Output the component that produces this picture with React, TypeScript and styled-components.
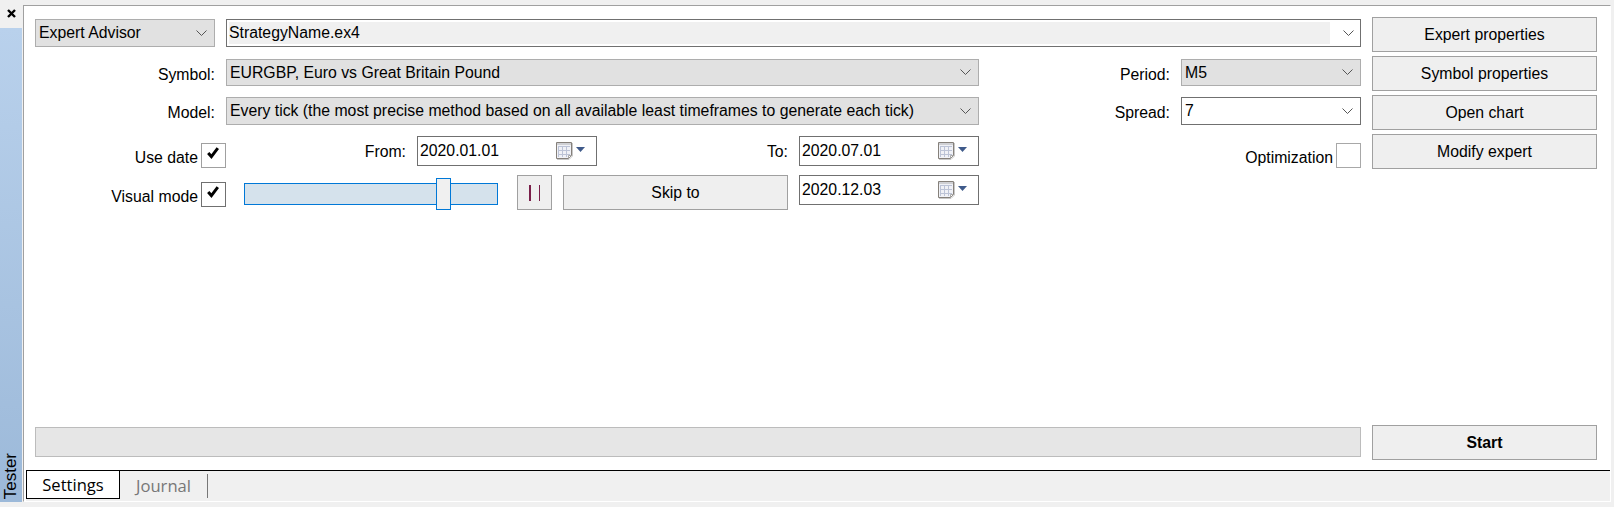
import React from "react";
import styled, { createGlobalStyle } from "styled-components";

const GlobalStyle = createGlobalStyle`
  html, body {
    margin: 0;
    padding: 0;
    background: #f0f0f0;
  }
  * {
    box-sizing: border-box;
  }
`;

const Chevron = () => (
  <svg width="11" height="7" viewBox="0 0 11 7">
    <path d="M0.5 0.5 L5.5 5.5 L10.5 0.5" fill="none" stroke="#555" strokeWidth="1" />
  </svg>
);

const CalendarIcon = () => (
  <svg width="29" height="18" viewBox="0 0 29 18">
    <path d="M1 17.5 H13 L16.5 14 V1" fill="none" stroke="#c8c8c8" />
    <path d="M0.5 0.5 H15.5 V13.5 L12.5 16.5 H0.5 Z" fill="#f0f1f6" stroke="#85807a" />
    <path d="M1 1.5 H15 M1 2.5 H15" stroke="#cfd0d4" />
    <path d="M2 4.5 H14 M2 8.5 H14 M2 12.5 H14 M2.5 4 V15 M6.5 4 V15 M10.5 4 V15" stroke="#bcc3d6" />
    <path d="M12.5 16 V13.5 H15" fill="#fff" stroke="#a8a8a8" />
    <path d="M20 5 H29 L24.5 10 Z" fill="#3f5a8a" />
  </svg>
);

const CheckMark = () => (
  <svg width="12" height="12" viewBox="0 0 12 12">
    <path d="M1.2 6 L4.4 9.6 L10.8 1.2" fill="none" stroke="#000" strokeWidth="3" />
  </svg>
);

const CloseIcon = () => (
  <svg width="9" height="9" viewBox="0 0 9 9">
    <path d="M1 1 L8 8 M8 1 L1 8" stroke="#000" strokeWidth="2.4" />
  </svg>
);

const App = () => {
  return (
    <>
      <GlobalStyle />
      <Window>
        <Sidebar>
          <CloseBar>
            <CloseIcon />
          </CloseBar>
          <DockTab>
            <DockLabel>Tester</DockLabel>
          </DockTab>
        </Sidebar>
        <Main>
          <Panel>
            <TopArea>
              <Form>
                <Row $height={28}>
                  <Select $width={180}>
                    <span>Expert Advisor</span>
                    <Chevron />
                  </Select>
                  <Combo>
                    <ComboFill>StrategyName.ex4</ComboFill>
                    <ComboArrow>
                      <Chevron />
                    </ComboArrow>
                  </Combo>
                </Row>
                <Row $height={27} $top={12}>
                  <Label $width={180}>Symbol:</Label>
                  <Select $width={753}>
                    <span>EURGBP, Euro vs Great Britain Pound</span>
                    <Chevron />
                  </Select>
                  <Spacer />
                  <Label>Period:</Label>
                  <Select $width={180}>
                    <span>M5</span>
                    <Chevron />
                  </Select>
                </Row>
                <Row $height={28} $top={11}>
                  <Label $width={180}>Model:</Label>
                  <Select $width={753}>
                    <span>Every tick (the most precise method based on all available least timeframes to generate each tick)</span>
                    <Chevron />
                  </Select>
                  <Spacer />
                  <Label>Spread:</Label>
                  <Select $width={180} $light>
                    <span>7</span>
                    <Chevron />
                  </Select>
                </Row>
                <Row $height={30} $top={11}>
                  <CheckGroup $width={191}>
                    <CheckLabel>Use date</CheckLabel>
                    <CheckBox>
                      <CheckMark />
                    </CheckBox>
                  </CheckGroup>
                  <Label $width={169}>From:</Label>
                  <DateField>
                    2020.01.01
                    <CalendarIcon />
                  </DateField>
                  <Label $width={180}>To:</Label>
                  <DateField>
                    2020.07.01
                    <CalendarIcon />
                  </DateField>
                  <Spacer />
                  <CheckGroup>
                    <CheckLabel>Optimization</CheckLabel>
                    <CheckBox $muted />
                  </CheckGroup>
                </Row>
                <Row $height={35} $top={9}>
                  <CheckGroup $width={191}>
                    <CheckLabel>Visual mode</CheckLabel>
                    <CheckBox $dark>
                      <CheckMark />
                    </CheckBox>
                  </CheckGroup>
                  <Slider>
                    <SliderThumb />
                  </Slider>
                  <PauseButton>
                    <PauseBar />
                    <PauseBar />
                  </PauseButton>
                  <Button $width={225} $height={35}>
                    Skip to
                  </Button>
                  <DateField>
                    2020.12.03
                    <CalendarIcon />
                  </DateField>
                </Row>
              </Form>
              <ButtonColumn>
                <Button>Expert properties</Button>
                <Button>Symbol properties</Button>
                <Button>Open chart</Button>
                <Button>Modify expert</Button>
              </ButtonColumn>
            </TopArea>
            <BottomArea>
              <ProgressBar />
              <Button $width={225} $height={35} $bold>
                Start
              </Button>
            </BottomArea>
          </Panel>
          <TabStrip>
            <TabRow>
              <Tab $active>Settings</Tab>
              <Tab>Journal</Tab>
              <TabDivider />
            </TabRow>
          </TabStrip>
        </Main>
      </Window>
    </>
  );
};

const Window = styled.div`
  width: 1614px;
  height: 507px;
  display: flex;
  background: #f0f0f0;
  font-family: "Liberation Sans", Arial, sans-serif;
  font-size: 15.8px;
  color: #000;
  overflow: hidden;
`;

const Sidebar = styled.div`
  width: 23px;
  flex: none;
  display: flex;
  flex-direction: column;
  padding-bottom: 5px;
`;

const CloseBar = styled.div`
  height: 28px;
  width: 22px;
  padding-top: 9px;
  padding-left: 7px;
  line-height: 0;
`;

const DockTab = styled.div`
  flex: 1;
  width: 22px;
  display: flex;
  align-items: flex-end;
  justify-content: center;
  padding-bottom: 3px;
  background: linear-gradient(180deg, #b9d1ec 0%, #9cb9d9 100%);
`;

const DockLabel = styled.div`
  writing-mode: vertical-rl;
  transform: rotate(180deg);
  font-size: 17px;
  line-height: 18px;
  color: #000;
`;

const Main = styled.div`
  width: 1588px;
  flex: none;
  margin-top: 5px;
  margin-bottom: 5px;
  display: flex;
  flex-direction: column;
  border-left: 1px solid #a0a0a0;
  border-top: 1px solid #a0a0a0;
  border-right: 1px solid #fff;
  border-bottom: 1px solid #fff;
`;

const Panel = styled.div`
  flex: 1;
  background: #fff;
  display: flex;
  flex-direction: column;
  justify-content: space-between;
  padding: 11px 13px 10px 11px;
`;

const TopArea = styled.div`
  display: flex;
  gap: 11px;
`;

const Form = styled.div`
  flex: 1;
  padding-top: 2px;
  display: flex;
  flex-direction: column;
`;

const Row = styled.div<{ $height: number; $top?: number }>`
  height: ${(p) => p.$height}px;
  margin-top: ${(p) => p.$top ?? 0}px;
  display: flex;
  gap: 11px;
`;

const Spacer = styled.div`
  flex: 1;
`;

const Label = styled.div<{ $width?: number }>`
  ${(p) => (p.$width ? `width: ${p.$width}px;` : "")}
  height: 28px;
  flex: none;
  display: flex;
  align-items: center;
  justify-content: flex-end;
  padding-top: 3px;
`;

const Select = styled.div<{ $width: number; $light?: boolean }>`
  width: ${(p) => p.$width}px;
  flex: none;
  height: 100%;
  padding: 0 7px 0 3px;
  display: flex;
  align-items: center;
  justify-content: space-between;
  background: ${(p) => (p.$light ? "#fff" : "#e1e1e1")};
  border: 1px solid ${(p) => (p.$light ? "#707070" : "#adadad")};
`;

const Combo = styled.div`
  flex: 1;
  height: 100%;
  padding: 2px;
  display: flex;
  background: #fff;
  border: 1px solid #707070;
`;

const ComboFill = styled.div`
  flex: 1;
  display: flex;
  align-items: center;
  background: #f0f0f0;
`;

const ComboArrow = styled.div`
  width: 28px;
  flex: none;
  display: flex;
  align-items: center;
  justify-content: flex-end;
  padding: 0 4px 0 0;
`;

const CheckGroup = styled.div<{ $width?: number }>`
  ${(p) => (p.$width ? `width: ${p.$width}px;` : "")}
  flex: none;
  display: flex;
  justify-content: flex-end;
  gap: 3px;
  padding-top: 7px;
`;

const CheckLabel = styled.div`
  height: 24px;
  padding-top: 5px;
  display: flex;
  align-items: center;
`;

const CheckBox = styled.div<{ $dark?: boolean; $muted?: boolean }>`
  width: 25px;
  height: 25px;
  flex: none;
  padding: 0 2px 5px 0;
  display: flex;
  align-items: center;
  justify-content: center;
  background: #fff;
  border: 1px solid ${(p) => (p.$dark ? "#707070" : p.$muted ? "#a8a8a8" : "#a0a0a0")};
`;

const DateField = styled.div`
  width: 180px;
  height: 30px;
  flex: none;
  padding: 0 11px 1px 2px;
  display: flex;
  align-items: center;
  justify-content: space-between;
  background: #fff;
  border: 1px solid #707070;
`;

const Slider = styled.div`
  position: relative;
  width: 254px;
  height: 22px;
  flex: none;
  margin: 8px 8px 0 7px;
  background: #d5e2ec;
  border: 1px solid #0078d7;
`;

const SliderThumb = styled.div`
  position: absolute;
  left: 191px;
  top: -6px;
  width: 15px;
  height: 32px;
  background: #f0f0f0;
  border: 1px solid #0078d7;
`;

const PauseButton = styled.div`
  width: 35px;
  height: 35px;
  flex: none;
  display: flex;
  align-items: center;
  justify-content: center;
  gap: 8px;
  background: #efefef;
  border: 1px solid #a0a0a0;
`;

const PauseBar = styled.div`
  width: 1.5px;
  height: 16px;
  background: #7a1f4a;
`;

const Button = styled.div<{ $width?: number; $height?: number; $bold?: boolean }>`
  width: ${(p) => p.$width ?? 225}px;
  height: ${(p) => p.$height ?? 35}px;
  flex: none;
  padding-top: 1px;
  display: flex;
  align-items: center;
  justify-content: center;
  background: #efefef;
  border: 1px solid #a0a0a0;
  font-weight: ${(p) => (p.$bold ? 700 : 400)};
`;

const ButtonColumn = styled.div`
  display: flex;
  flex-direction: column;
  gap: 4px;
`;

const BottomArea = styled.div`
  display: flex;
  align-items: center;
  gap: 11px;
`;

const ProgressBar = styled.div`
  flex: 1;
  height: 30px;
  margin-bottom: 1px;
  background: #e6e6e6;
  border: 1px solid #bcbcbc;
`;

const TabStrip = styled.div`
  height: 31px;
  flex: none;
  padding-left: 2px;
  background: #fff;
`;

const TabRow = styled.div`
  height: 100%;
  display: flex;
  align-items: flex-start;
  background: #f0f0f0;
  border-top: 1px solid #000;
`;

const Tab = styled.div<{ $active?: boolean }>`
  width: ${(p) => (p.$active ? "94px" : "87px")};
  height: 28px;
  display: flex;
  align-items: center;
  justify-content: center;
  font-family: "Open Sans", "Liberation Sans", sans-serif;
  font-size: 16.6px;
  color: ${(p) => (p.$active ? "#000" : "#777")};
  background: ${(p) => (p.$active ? "#fff" : "transparent")};
  ${(p) => (p.$active ? "border: 1px solid #000; border-top: none;" : "")}
`;

const TabDivider = styled.div`
  width: 1px;
  height: 24px;
  margin-top: 3px;
  background: #777;
`;

export default App;
